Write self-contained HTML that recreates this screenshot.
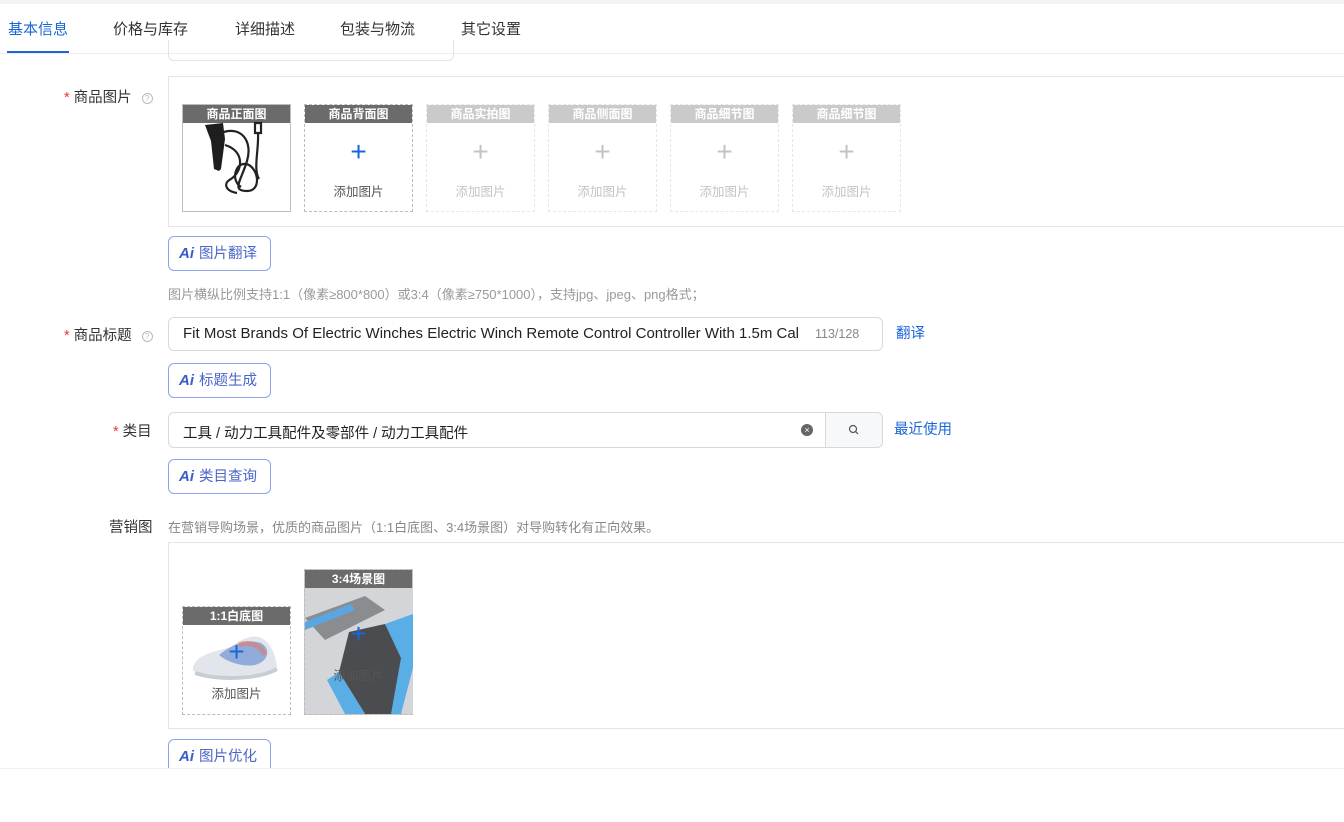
<!DOCTYPE html>
<html><head><meta charset="utf-8"><style>
*{box-sizing:border-box;margin:0;padding:0}
body{width:1344px;height:822px;position:relative;overflow:hidden;background:#fff;font-family:"Liberation Sans","Noto Sans CJK SC",sans-serif;color:#333}
.a{position:absolute}
.tab{position:absolute;top:18px;font-size:15px;color:#333}
.lbl{position:absolute;font-size:14.5px;color:#333;text-align:right}
.req{color:#e4393c;margin-right:4px}
.q{display:inline-block;width:11px;height:11px;border:1px solid #bbb;border-radius:50%;font-size:8px;line-height:9px;text-align:center;color:#bbb;margin-left:10px;vertical-align:1px}
.box{position:absolute;border:1px solid #e4e4e4;border-right:none}
.tile{position:absolute;width:109px;border:1px dashed #bdbdbd;background:#fff}
.tile .h{height:18px;background:#6b6b6b;color:#fff;font-size:12px;text-align:center;line-height:18px;font-weight:bold}
.tile .p{position:absolute;left:0;right:0;text-align:center;color:#1a66d8;font-size:28px;font-weight:300;line-height:28px}
.tile .t{position:absolute;left:0;right:0;text-align:center;font-size:12.5px;color:#555}
.fade{opacity:.35}
.ai{position:absolute;left:168px;width:103px;height:35px;border:1px solid #8ea4ea;border-radius:6px;font-size:14.5px;color:#4a66c8;line-height:33px;padding-left:10px;background:#fff}
.ai b{font-style:italic;font-weight:900;color:#3a5cc8;margin-right:5px;font-size:15px}
.inp{position:absolute;border:1px solid #d9d9d9;border-radius:6px;background:#fff;font-size:14.5px;color:#222}
.link{position:absolute;color:#1a66d8;font-size:14.5px}
</style></head><body>
<div class="a" style="left:0;top:0;width:1344px;height:4px;background:#f3f4f6"></div>
<div class="a" style="left:0;top:53px;width:1344px;height:1px;background:#eceef1"></div>
<div class="tab" style="left:8px;color:#1a66d8">基本信息</div>
<div class="a" style="left:7px;top:51px;width:62px;height:2px;background:#1a66d8"></div>
<div class="tab" style="left:113px">价格与库存</div>
<div class="tab" style="left:235px">详细描述</div>
<div class="tab" style="left:340px">包装与物流</div>
<div class="tab" style="left:461px">其它设置</div>
<div class="a" style="left:168px;top:40px;width:286px;height:21px;border:1px solid #e4e4e4;border-top:none;border-radius:0 0 6px 6px"></div>

<div class="lbl" style="left:64px;top:86px"><span class="req">*</span>商品图片<span class="q">?</span></div>
<div class="box" style="left:168px;top:76px;width:1180px;height:151px"></div>
<div class="tile" style="left:182px;top:104px;height:108px;border-style:solid"><div class="h">商品正面图</div>
<svg class="a" style="left:18px;top:16px" width="72" height="75" viewBox="0 0 72 75"><path d="M4 4 L22 2 L24 18 L20 48 L18 50 L13 48 L10 20 Z" fill="#1e1e1e"/><path d="M20 12 C40 4,52 20,46 40 C40 60,30 70,46 70 C60 70,58 50,48 44 C36 38,28 58,40 66 M24 24 C44 30,42 50,30 58 C22 62,24 70,36 72 M54 2 L60 2 L60 12 L54 12 Z M57 12 C58 28,52 48,58 58" stroke="#222" stroke-width="2.2" fill="none"/></svg></div>
<div class="tile" style="left:304px;top:104px;height:108px"><div class="h">商品背面图</div><div class="p" style="top:33px">+</div><div class="t" style="top:76px">添加图片</div></div>
<div class="tile fade" style="left:426px;top:104px;height:108px"><div class="h">商品实拍图</div><div class="p" style="top:33px;color:#555">+</div><div class="t" style="top:76px">添加图片</div></div>
<div class="tile fade" style="left:548px;top:104px;height:108px"><div class="h">商品侧面图</div><div class="p" style="top:33px;color:#555">+</div><div class="t" style="top:76px">添加图片</div></div>
<div class="tile fade" style="left:670px;top:104px;height:108px"><div class="h">商品细节图</div><div class="p" style="top:33px;color:#555">+</div><div class="t" style="top:76px">添加图片</div></div>
<div class="tile fade" style="left:792px;top:104px;height:108px"><div class="h">商品细节图</div><div class="p" style="top:33px;color:#555">+</div><div class="t" style="top:76px">添加图片</div></div>

<div class="ai" style="top:236px"><b>Ai</b>图片翻译</div>
<div class="a" style="left:168px;top:284px;font-size:13px;color:#999">图片横纵比例支持1:1（像素≥800*800）或3:4（像素≥750*1000），支持jpg、jpeg、png格式；</div>

<div class="lbl" style="left:64px;top:324px"><span class="req">*</span>商品标题<span class="q">?</span></div>
<div class="inp" style="left:168px;top:317px;width:715px;height:34px;padding:7px 0 0 14px;white-space:nowrap;overflow:hidden;font-size:15px">Fit Most Brands Of Electric Winches Electric Winch Remote Control Controller With 1.5m Cal<span class="a" style="left:640px;top:9px;font-size:12.5px;color:#888;background:#fff;padding-left:6px;padding-right:20px">113/128</span></div>
<div class="link" style="left:896px;top:322px">翻译</div>
<div class="ai" style="top:363px"><b>Ai</b>标题生成</div>

<div class="lbl" style="left:113px;top:420px"><span class="req">*</span>类目</div>
<div class="inp" style="left:168px;top:412px;width:715px;height:36px;padding:9px 0 0 14px">工具 / 动力工具配件及零部件 / 动力工具配件
<span class="a" style="left:632px;top:11px;width:12px;height:12px;border-radius:50%;background:#666;color:#fff;font-size:9px;line-height:12px;text-align:center">×</span>
<span class="a" style="left:656px;top:-1px;width:58px;height:36px;border:1px solid #d9d9d9;background:#f7f8fa;border-radius:0 6px 6px 0"><svg class="a" style="left:22px;top:11px" width="12" height="12" viewBox="0 0 12 12"><circle cx="5" cy="5" r="3.5" stroke="#555" stroke-width="1.2" fill="none"/><path d="M7.6 7.6 L10 10" stroke="#555" stroke-width="1.2"/></svg></span></div>
<div class="link" style="left:894px;top:418px">最近使用</div>
<div class="ai" style="top:459px"><b>Ai</b>类目查询</div>

<div class="lbl" style="left:109px;top:516px">营销图</div>
<div class="a" style="left:168px;top:517px;font-size:13px;color:#888">在营销导购场景，优质的商品图片（1:1白底图、3:4场景图）对导购转化有正向效果。</div>
<div class="box" style="left:168px;top:542px;width:1180px;height:187px"></div>
<div class="tile" style="left:182px;top:606px;height:109px"><div class="h">1:1白底图</div>
<svg class="a" style="left:6px;top:24px" width="96" height="54" viewBox="0 0 96 54"><path d="M4 36 C8 22,30 20,42 16 C52 8,62 4,70 6 C80 10,86 20,88 36 C70 46,30 48,4 40 Z" fill="#e2e5ec"/><path d="M30 24 C44 12,60 8,72 12 C82 18,80 30,66 34 C54 36,40 32,30 24Z" fill="#7d9ed6" opacity=".8"/><path d="M50 14 C60 10,72 14,76 24" stroke="#e07a6a" stroke-width="5" fill="none" opacity=".6"/><path d="M6 42 C30 50,70 48,88 38" stroke="#c8ccd4" stroke-width="4" fill="none"/></svg>
<div class="p" style="top:31px">+</div><div class="t" style="top:76px">添加图片</div></div>
<div class="tile" style="left:304px;top:569px;height:146px;background:#c9cbce"><div class="h">3:4场景图</div>
<svg class="a" style="left:0;top:18px" width="108" height="126" viewBox="0 0 108 126"><rect width="108" height="126" fill="#d3d5d8"/><path d="M0 30 L60 8 L80 22 L20 52 Z" fill="#8a8c90"/><path d="M0 34 L46 16 L50 22 L0 42Z" fill="#5aa6e0"/><path d="M44 44 L80 36 L100 70 L90 126 L60 126 L34 84Z" fill="#4a4c50"/><path d="M80 36 L108 26 L108 80 L96 126 L86 126 L96 70Z" fill="#5aaee6"/><path d="M34 84 L60 126 L40 126 L22 92Z" fill="#5aaee6"/></svg>
<div class="p" style="top:50px">+</div><div class="t" style="top:95px">添加图片</div></div>

<div class="ai" style="top:739px"><b>Ai</b>图片优化</div>
<div class="a" style="left:0;top:768px;width:1344px;height:54px;background:#fff;border-top:1px solid #eef0f2"></div>
</body></html>
